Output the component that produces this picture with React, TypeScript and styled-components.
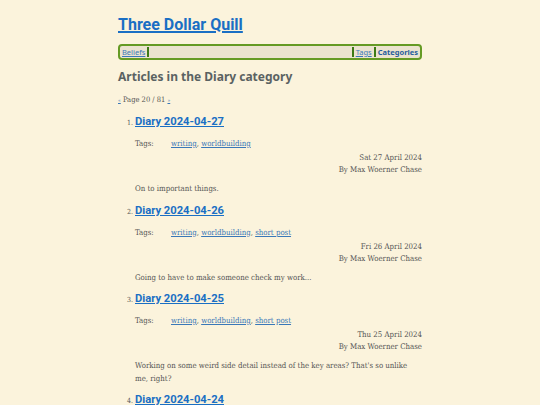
import React from "react";
import styled, { createGlobalStyle } from "styled-components";

const Global = createGlobalStyle`
  html, body { margin: 0; padding: 0; background: #fbf3dc; }
  body { font-family: "DejaVu Serif Condensed", "DejaVu Serif", serif; font-stretch: condensed; color: #555; }
`;

const Page = styled.div`
  width: 304px;
  margin: 0 auto;
  padding-top: 14px;
`;

const SiteTitle = styled.a`
  display: block;
  font-family: Roboto, "Noto Sans", sans-serif;
  font-stretch: normal;
  font-weight: 700;
  font-size: 16px;
  line-height: 22px;
  color: #1a6fc4;
  text-decoration: underline;
  text-decoration-thickness: 2px;
`;

const Nav = styled.nav`
  margin-top: 8px;
  display: flex;
  align-items: center;
  border: 2px solid #659a24;
  border-radius: 4px;
  background: #ebe3cf;
  height: 12px;
  padding: 0 1px;
  font-family: "Noto Sans", sans-serif;
  font-stretch: normal;
  font-size: 7.5px;
`;

const NavLink = styled.a<{ $bold?: boolean }>`
  color: ${(p) => (p.$bold ? "#1f5c9c" : "#3a78b8")};
  font-weight: ${(p) => (p.$bold ? 700 : 400)};
  text-decoration: ${(p) => (p.$bold ? "none" : "underline")};
  padding: 0 1px;
`;

const Sep = styled.span`
  display: inline-block;
  width: 2px;
  height: 10px;
  background: #3d7a14;
  margin: 0 1px;
`;

const Spacer = styled.div`
  flex: 1;
`;

const Heading = styled.h2`
  margin: 9px 0 0;
  font-family: "Noto Sans", sans-serif;
  font-stretch: normal;
  font-weight: 700;
  font-size: 12px;
  line-height: 16px;
  color: #5a6262;
`;

const Pager = styled.div`
  margin-top: 10px;
  font-size: 7.5px;
  line-height: 10px;
  color: #555;
  a { color: #3a78b8; font-size: 5px; }
`;

const List = styled.ol`
  margin: 9px 0 0;
  padding-left: 17px;
  font-size: 7px;
`;

const Item = styled.li`
  margin-bottom: 7px;
  &::marker { color: #555; font-size: 7px; }
`;

const ItemTitle = styled.a`
  font-family: Roboto, "Noto Sans", sans-serif;
  font-stretch: normal;
  font-weight: 700;
  font-size: 11.2px;
  line-height: 16px;
  color: #1a6fc4;
  text-decoration: underline;
`;

const TagsRow = styled.div`
  margin-top: 9px;
  display: flex;
  font-size: 7.8px;
  line-height: 10px;
`;

const TagsLabel = styled.span`
  width: 36px;
  color: #555;
`;

const TagLink = styled.a`
  color: #3a78b8;
  text-decoration: underline;
`;

const Meta = styled.div`
  margin-top: 3px;
  text-align: right;
  font-size: 7.8px;
  line-height: 12px;
  color: #555;
`;

const Summary = styled.p`
  margin: 7px 0 0;
  font-size: 7.8px;
  line-height: 12.5px;
  color: #555;
`;

const posts = [
  { title: "Diary 2024-04-27", tags: ["writing", "worldbuilding"], date: "Sat 27 April 2024", summary: "On to important things." },
  { title: "Diary 2024-04-26", tags: ["writing", "worldbuilding", "short post"], date: "Fri 26 April 2024", summary: "Going to have to make someone check my work..." },
  { title: "Diary 2024-04-25", tags: ["writing", "worldbuilding", "short post"], date: "Thu 25 April 2024", summary: "Working on some weird side detail instead of the key areas? That's so unlike me, right?" },
  { title: "Diary 2024-04-24", tags: ["writing", "worldbuilding"], date: "Wed 24 April 2024", summary: "" },
];

export default function App() {
  return (
    <>
      <Global />
      <Page>
        <SiteTitle href="#">Three Dollar Quill</SiteTitle>
        <Nav>
          <NavLink href="#">Beliefs</NavLink>
          <Sep />
          <Spacer />
          <Sep />
          <NavLink href="#">Tags</NavLink>
          <Sep />
          <NavLink href="#" $bold>Categories</NavLink>
        </Nav>
        <Heading>Articles in the Diary category</Heading>
        <Pager>
          <a href="#">«</a> Page 20 / 81 <a href="#">»</a>
        </Pager>
        <List>
          {posts.map((p) => (
            <Item key={p.title}>
              <ItemTitle href="#">{p.title}</ItemTitle>
              <TagsRow>
                <TagsLabel>Tags:</TagsLabel>
                <span>
                  {p.tags.map((t, i) => (
                    <React.Fragment key={t}>
                      <TagLink href="#">{t}</TagLink>
                      {i < p.tags.length - 1 ? ", " : ""}
                    </React.Fragment>
                  ))}
                </span>
              </TagsRow>
              <Meta>
                {p.date}
                <br />
                By Max Woerner Chase
              </Meta>
              {p.summary && <Summary>{p.summary}</Summary>}
            </Item>
          ))}
        </List>
      </Page>
    </>
  );
}
